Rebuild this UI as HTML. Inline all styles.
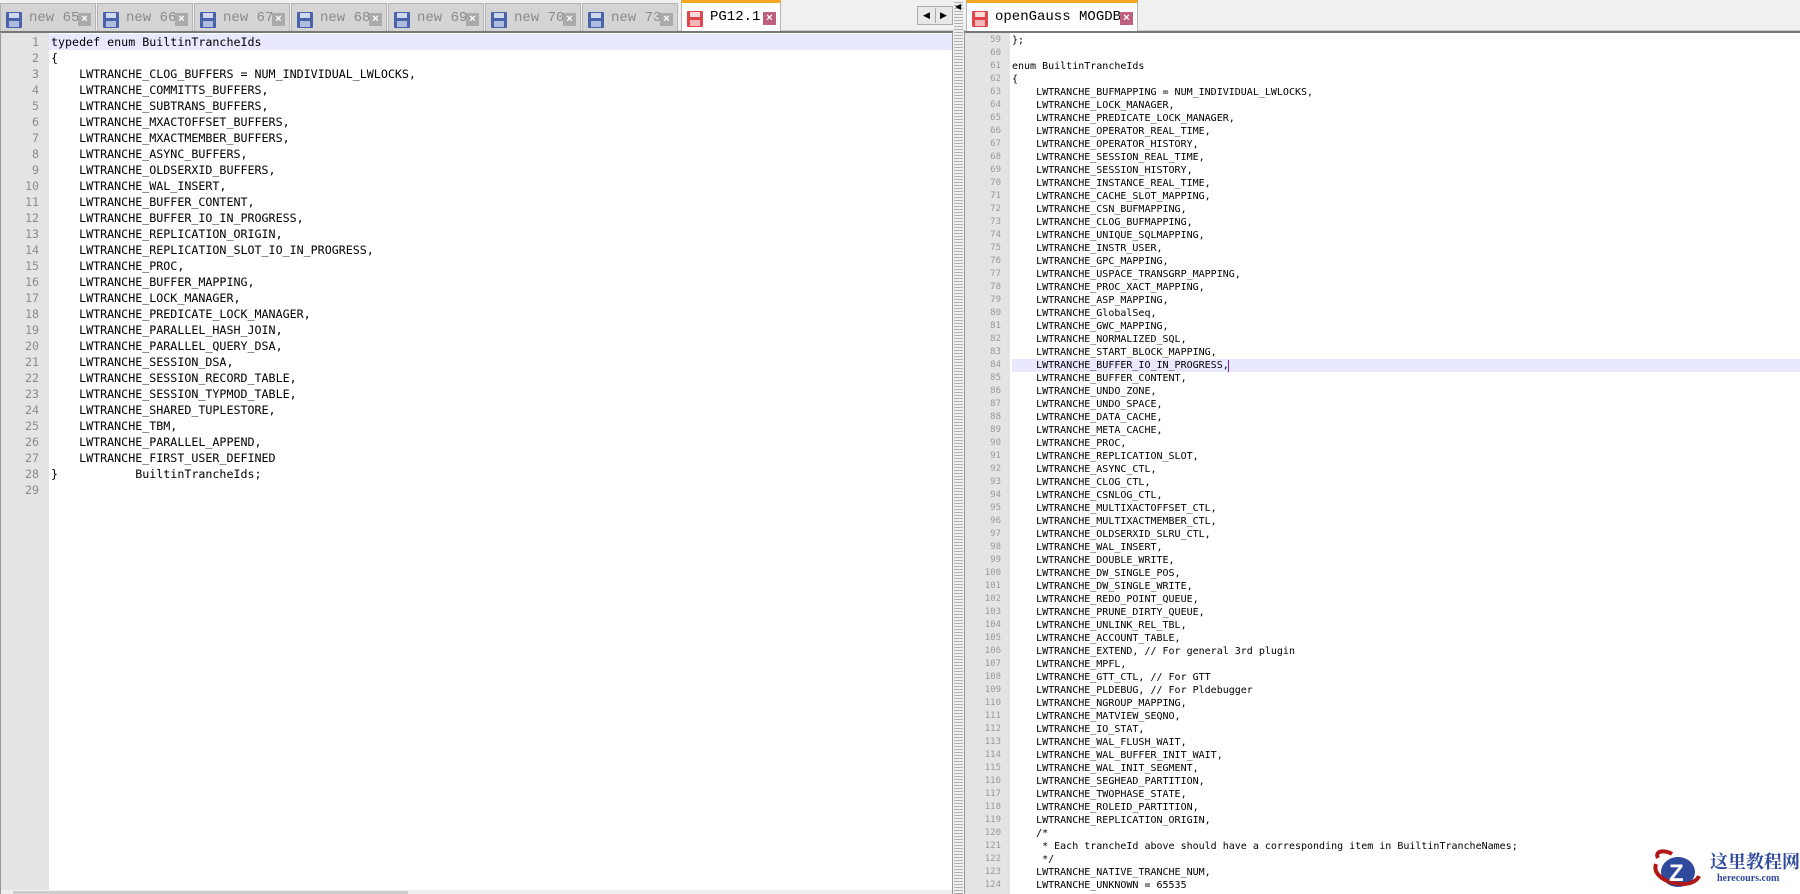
<!DOCTYPE html>
<html><head><meta charset="utf-8"><style>
*{margin:0;padding:0;box-sizing:border-box}
body{width:1800px;height:894px;overflow:hidden;background:#f0f0f0;position:relative;font-family:"Liberation Mono",monospace}
.tab{position:absolute;top:3px;height:28px;width:96px;background:#d4d4d4;border:1px solid #b5b5b5;border-bottom:none;font-size:14px;color:#8a8a8a}
.tab .ic{position:absolute;left:5px;top:8px;width:16px;height:16px;background:#4a62a8;border-radius:1px}
.tab .ic:before{content:"";position:absolute;left:3px;top:1px;width:10px;height:5px;background:#cfd8ee}
.tab .ic:after{content:"";position:absolute;left:3px;top:9px;width:10px;height:6px;background:#aebce0}
.tab .t{position:absolute;left:28px;top:6px;letter-spacing:0}
.tab .x{position:absolute;right:4px;top:9px;width:13px;height:13px;background:#aaa;color:#fff;font:bold 11px/13px "Liberation Sans",sans-serif;text-align:center}
.tab.act{background:#fff;border-top:3px solid #f5a623;top:0;height:31px;color:#000}
.tab.act .ic{background:#e0464c;top:8px}
.tab.act .ic:before{background:#fbdcdc}
.tab.act .ic:after{background:#f4b7b9}
.tab.act .x{background:#c06080}
.pane{position:absolute;background:#fff;border-top:2px solid #777;overflow:hidden}
.gut{position:absolute;top:0;bottom:0;background:#e4e4e4}
pre{position:absolute;margin:0;white-space:pre}
</style></head><body>
<div style="position:absolute;left:0;top:0;width:1800px;height:31px;background:#f0f0f0;border-bottom:1px solid #ccc"></div>
<div class="tab" style="left:0"><div class="ic"></div><span class="t">new 65</span><span class="x">×</span></div>
<div class="tab" style="left:97px"><div class="ic"></div><span class="t">new 66</span><span class="x">×</span></div>
<div class="tab" style="left:194px"><div class="ic"></div><span class="t">new 67</span><span class="x">×</span></div>
<div class="tab" style="left:291px"><div class="ic"></div><span class="t">new 68</span><span class="x">×</span></div>
<div class="tab" style="left:388px"><div class="ic"></div><span class="t">new 69</span><span class="x">×</span></div>
<div class="tab" style="left:485px"><div class="ic"></div><span class="t">new 70</span><span class="x">×</span></div>
<div class="tab" style="left:582px"><div class="ic"></div><span class="t">new 73</span><span class="x">×</span></div>
<div class="tab act" style="left:681px;width:100px"><div class="ic"></div><span class="t">PG12.1</span><span class="x">×</span></div>
<div style="position:absolute;left:917px;top:6px;width:36px;height:19px;border:1px solid #aaa;background:#e8e8e8;font:9px/17px 'Liberation Sans',sans-serif;color:#000"><span style="position:absolute;left:5px">◀</span><span style="position:absolute;left:22px">▶</span><span style="position:absolute;left:17px;top:1px;width:1px;height:15px;background:#aaa"></span></div>
<div style="position:absolute;left:954px;top:0;width:9px;height:894px;background:repeating-linear-gradient(#f0f0f0 0 2px,#b0b0b0 2px 3px)"></div>
<div style="position:absolute;left:955px;top:2px;font:8px 'Liberation Sans',sans-serif;color:#000">◀</div>
<div class="tab act" style="left:966px;width:172px"><div class="ic"></div><span class="t">openGauss MOGDB</span><span class="x">×</span></div>

<div class="pane" style="left:0;top:31px;width:953px;height:863px;border-left:1px solid #999;border-right:1px solid #999">
<div class="gut" style="left:0;width:48px"></div>
<div style="position:absolute;left:48px;top:1px;width:905px;height:16px;background:#e8e8ff"></div>
<pre style="left:0;top:1px;width:38px;text-align:right;font-size:11.67px;line-height:16px;color:#8a8a8a">1
2
3
4
5
6
7
8
9
10
11
12
13
14
15
16
17
18
19
20
21
22
23
24
25
26
27
28
29</pre>
<pre style="left:50px;top:1px;font-size:11.67px;line-height:16px;color:#000">typedef enum BuiltinTrancheIds
{
    LWTRANCHE_CLOG_BUFFERS = NUM_INDIVIDUAL_LWLOCKS,
    LWTRANCHE_COMMITTS_BUFFERS,
    LWTRANCHE_SUBTRANS_BUFFERS,
    LWTRANCHE_MXACTOFFSET_BUFFERS,
    LWTRANCHE_MXACTMEMBER_BUFFERS,
    LWTRANCHE_ASYNC_BUFFERS,
    LWTRANCHE_OLDSERXID_BUFFERS,
    LWTRANCHE_WAL_INSERT,
    LWTRANCHE_BUFFER_CONTENT,
    LWTRANCHE_BUFFER_IO_IN_PROGRESS,
    LWTRANCHE_REPLICATION_ORIGIN,
    LWTRANCHE_REPLICATION_SLOT_IO_IN_PROGRESS,
    LWTRANCHE_PROC,
    LWTRANCHE_BUFFER_MAPPING,
    LWTRANCHE_LOCK_MANAGER,
    LWTRANCHE_PREDICATE_LOCK_MANAGER,
    LWTRANCHE_PARALLEL_HASH_JOIN,
    LWTRANCHE_PARALLEL_QUERY_DSA,
    LWTRANCHE_SESSION_DSA,
    LWTRANCHE_SESSION_RECORD_TABLE,
    LWTRANCHE_SESSION_TYPMOD_TABLE,
    LWTRANCHE_SHARED_TUPLESTORE,
    LWTRANCHE_TBM,
    LWTRANCHE_PARALLEL_APPEND,
    LWTRANCHE_FIRST_USER_DEFINED
}           BuiltinTrancheIds;</pre>
<div style="position:absolute;left:0;top:857px;width:953px;height:6px;background:#f0f0f0"></div>
<div style="position:absolute;left:12px;top:858px;width:395px;height:5px;background:#cdcdcd"></div>
</div>

<div class="pane" style="left:964px;top:31px;width:836px;height:863px;border-left:1px solid #999">
<div class="gut" style="left:0;width:45px"></div>
<div style="position:absolute;left:47px;top:326px;width:800px;height:13px;background:#e8e8ff"></div>
<div style="position:absolute;left:263px;top:327px;width:1px;height:12px;background:#7020a0"></div>
<pre style="left:0;top:1px;width:36px;text-align:right;font-size:9px;line-height:13px;color:#999">59
60
61
62
63
64
65
66
67
68
69
70
71
72
73
74
75
76
77
78
79
80
81
82
83
84
85
86
87
88
89
90
91
92
93
94
95
96
97
98
99
100
101
102
103
104
105
106
107
108
109
110
111
112
113
114
115
116
117
118
119
120
121
122
123
124</pre>
<pre style="left:47px;top:1px;font-size:10px;line-height:13px;color:#000">};

enum BuiltinTrancheIds
{
    LWTRANCHE_BUFMAPPING = NUM_INDIVIDUAL_LWLOCKS,
    LWTRANCHE_LOCK_MANAGER,
    LWTRANCHE_PREDICATE_LOCK_MANAGER,
    LWTRANCHE_OPERATOR_REAL_TIME,
    LWTRANCHE_OPERATOR_HISTORY,
    LWTRANCHE_SESSION_REAL_TIME,
    LWTRANCHE_SESSION_HISTORY,
    LWTRANCHE_INSTANCE_REAL_TIME,
    LWTRANCHE_CACHE_SLOT_MAPPING,
    LWTRANCHE_CSN_BUFMAPPING,
    LWTRANCHE_CLOG_BUFMAPPING,
    LWTRANCHE_UNIQUE_SQLMAPPING,
    LWTRANCHE_INSTR_USER,
    LWTRANCHE_GPC_MAPPING,
    LWTRANCHE_USPACE_TRANSGRP_MAPPING,
    LWTRANCHE_PROC_XACT_MAPPING,
    LWTRANCHE_ASP_MAPPING,
    LWTRANCHE_GlobalSeq,
    LWTRANCHE_GWC_MAPPING,
    LWTRANCHE_NORMALIZED_SQL,
    LWTRANCHE_START_BLOCK_MAPPING,
    LWTRANCHE_BUFFER_IO_IN_PROGRESS,
    LWTRANCHE_BUFFER_CONTENT,
    LWTRANCHE_UNDO_ZONE,
    LWTRANCHE_UNDO_SPACE,
    LWTRANCHE_DATA_CACHE,
    LWTRANCHE_META_CACHE,
    LWTRANCHE_PROC,
    LWTRANCHE_REPLICATION_SLOT,
    LWTRANCHE_ASYNC_CTL,
    LWTRANCHE_CLOG_CTL,
    LWTRANCHE_CSNLOG_CTL,
    LWTRANCHE_MULTIXACTOFFSET_CTL,
    LWTRANCHE_MULTIXACTMEMBER_CTL,
    LWTRANCHE_OLDSERXID_SLRU_CTL,
    LWTRANCHE_WAL_INSERT,
    LWTRANCHE_DOUBLE_WRITE,
    LWTRANCHE_DW_SINGLE_POS,
    LWTRANCHE_DW_SINGLE_WRITE,
    LWTRANCHE_REDO_POINT_QUEUE,
    LWTRANCHE_PRUNE_DIRTY_QUEUE,
    LWTRANCHE_UNLINK_REL_TBL,
    LWTRANCHE_ACCOUNT_TABLE,
    LWTRANCHE_EXTEND, // For general 3rd plugin
    LWTRANCHE_MPFL,
    LWTRANCHE_GTT_CTL, // For GTT
    LWTRANCHE_PLDEBUG, // For Pldebugger
    LWTRANCHE_NGROUP_MAPPING,
    LWTRANCHE_MATVIEW_SEQNO,
    LWTRANCHE_IO_STAT,
    LWTRANCHE_WAL_FLUSH_WAIT,
    LWTRANCHE_WAL_BUFFER_INIT_WAIT,
    LWTRANCHE_WAL_INIT_SEGMENT,
    LWTRANCHE_SEGHEAD_PARTITION,
    LWTRANCHE_TWOPHASE_STATE,
    LWTRANCHE_ROLEID_PARTITION,
    LWTRANCHE_REPLICATION_ORIGIN,
    /*
     * Each trancheId above should have a corresponding item in BuiltinTrancheNames;
     */
    LWTRANCHE_NATIVE_TRANCHE_NUM,
    LWTRANCHE_UNKNOWN = 65535</pre>
</div>

<div style="position:absolute;left:1652px;top:848px;width:148px;height:44px;background:#fff">
<svg width="50" height="44" style="position:absolute;left:0;top:0">
<path d="M6 10 C2 2 14 2 20 6" stroke="#b01818" stroke-width="4" fill="none"/>
<ellipse cx="26" cy="24" rx="17" ry="15" fill="#2f4a9c"/>
<path d="M4 16 C-2 34 40 44 47 28" stroke="#b01818" stroke-width="4" fill="none"/>
<text x="17" y="33" font-family="Liberation Sans,sans-serif" font-weight="bold" font-size="24" fill="#fff">Z</text>
</svg>
<div style="position:absolute;left:58px;top:3px;font:bold 18px/20px 'Noto Serif CJK SC','Noto Sans CJK SC',serif;color:#2f4a9c">这里教程网</div>
<div style="position:absolute;left:65px;top:25px;font:bold 10px/12px 'Liberation Serif',serif;color:#2f4a9c">herecours.com</div>
</div>
</body></html>
